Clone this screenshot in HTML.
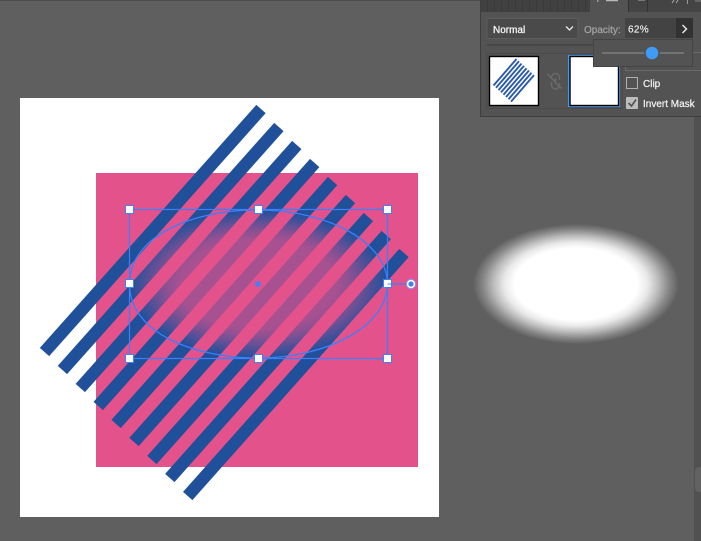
<!DOCTYPE html>
<html><head><meta charset="utf-8"><style>
html,body{margin:0;padding:0;width:701px;height:541px;overflow:hidden;background:#5f5f5f}
svg{position:absolute;left:0;top:0}
text{font-family:"Liberation Sans",sans-serif}
</style></head><body>
<svg width="701" height="541" viewBox="0 0 701 541" xmlns="http://www.w3.org/2000/svg">
<defs>
<radialGradient id="feather" cx="0.5" cy="0.5" r="0.5">
<stop offset="0" stop-color="#fff"/>
<stop offset="0.6" stop-color="#fff"/>
<stop offset="0.7" stop-color="#fff" stop-opacity=".86"/>
<stop offset="0.8" stop-color="#fff" stop-opacity=".58"/>
<stop offset="0.9" stop-color="#fff" stop-opacity=".26"/>
<stop offset="1" stop-color="#fff" stop-opacity="0"/>
</radialGradient>
<radialGradient id="maskg" cx="0.5" cy="0.5" r="0.5">
<stop offset="0" stop-color="#4f4f4f"/>
<stop offset="0.6" stop-color="#4f4f4f"/>
<stop offset="0.7" stop-color="#6e6e6e"/>
<stop offset="0.8" stop-color="#9c9c9c"/>
<stop offset="0.9" stop-color="#d0d0d0"/>
<stop offset="1" stop-color="#fff"/>
</radialGradient>
<mask id="m" maskUnits="userSpaceOnUse" x="0" y="0" width="701" height="541">
<rect width="701" height="541" fill="#fff"/>
<ellipse cx="258" cy="284" rx="129" ry="74" fill="url(#maskg)"/>
</mask>
</defs>

<rect x="0" y="0" width="701" height="1" fill="#4c4c4c"/>
<rect x="694" y="117" width="7" height="424" fill="#515151"/>
<rect x="695" y="467" width="8" height="25" rx="4" fill="#626262"/>

<!-- artboard -->
<rect x="20" y="98" width="419" height="419" fill="#fff"/>
<rect x="96" y="173" width="322" height="294" fill="#e4528c"/>

<g mask="url(#m)" stroke="#21509b" stroke-width="12.500" fill="none">
<path d="M261 109L44.500 352"/>
<path d="M278.900 127L62.400 370"/>
<path d="M296.800 145L80.300 388"/>
<path d="M314.700 163L98.200 406"/>
<path d="M332.600 181L116.100 424"/>
<path d="M350.500 199L134 442"/>
<path d="M368.400 217L151.900 460"/>
<path d="M386.200 235L169.800 478"/>
<path d="M404 253L187.700 496"/>
</g>

<!-- selection -->
<g fill="none" stroke="#3a80f8" stroke-width="1.200">
<rect x="129.500" y="209.500" width="258" height="149"/>
<path stroke-width="1.300" d="M129.500 284C129.500 238 188 210 258 210C329 210 387.500 243 387.500 284C387.500 325 329 358 258 358C196 358 129.500 334 129.500 284Z"/>
<path d="M387.500 284H407"/>
</g>
<circle cx="258" cy="284" r="3" fill="#4f7cf2"/>
<g fill="#fff" stroke="#3f82f5" stroke-width="1">
<rect x="125.500" y="205.500" width="8" height="8"/>
<rect x="254.500" y="205.500" width="8" height="8"/>
<rect x="383.500" y="205.500" width="8" height="8"/>
<rect x="125.500" y="279.500" width="8" height="8"/>
<rect x="383.500" y="279.500" width="8" height="8"/>
<rect x="125.500" y="354.500" width="8" height="8"/>
<rect x="254.500" y="354.500" width="8" height="8"/>
<rect x="383.500" y="354.500" width="8" height="8"/>
</g>
<path d="M387.500 284H392" stroke="#3f82f5" stroke-width="1"/>
<circle cx="411" cy="284" r="3.400" fill="#3f82f5" stroke="#fff" stroke-width="1.600"/>
<circle cx="411" cy="284" r="4.800" fill="none" stroke="#6f9ff8" stroke-width=".8"/>

<!-- mask preview -->
<ellipse cx="576" cy="284" rx="103" ry="60" fill="url(#feather)"/>

<!-- panel -->
<rect x="480" y="0" width="221" height="117" fill="#3e3e3e"/>
<rect x="481" y="12" width="220" height="104" fill="#535353"/>
<rect x="481" y="0" width="109" height="12" fill="#414141"/>
<g stroke="#3a3a3a" stroke-width="1">
<path d="M487.500 0V12M494.500 0V12M501.500 0V12M508.500 0V12M515.500 0V12M522.500 0V12M529.500 0V12M536.500 0V12M543.500 0V12M550.500 0V12M557.500 0V12M564.500 0V12M571.500 0V12M578.500 0V12M585.500 0V12"/>
</g>
<rect x="590" y="0" width="38" height="13" fill="#535353"/>
<rect x="628" y="0" width="73" height="12" fill="#444"/>
<path d="M628.500 0V12M647.500 0V12" stroke="#333" stroke-width="1"/>
<rect x="597" y="0" width="1.500" height="2" fill="#999"/>
<rect x="606" y="0" width="12" height="1.200" fill="#bbb"/>
<rect x="638" y="0" width="7" height="1" fill="#777"/>
<path d="M674 0L672 3M678 0L676 3" stroke="#aaa" stroke-width="1" fill="none"/>
<path d="M687.500 0V4" stroke="#999" stroke-width="1"/>
<path d="M695 1H701" stroke="#888" stroke-width="1"/>

<rect x="487" y="18.500" width="91" height="20" rx="1.500" fill="#4a4a4a" stroke="#5d5d5d" stroke-width="1"/>
<text x="493" y="33" font-size="10" fill="#f4f4f4" stroke="#f4f4f4" stroke-width=".3">Normal</text>
<path d="M566 26.500L569.500 30L573 26.500" fill="none" stroke="#ececec" stroke-width="1.300"/>
<text x="584" y="33" font-size="10" fill="#a2a2a2" stroke="#a2a2a2" stroke-width=".25">Opacity:</text>
<rect x="625" y="18" width="51" height="20" fill="#434343"/>
<text x="628" y="32.500" font-size="10" fill="#efefef" stroke="#efefef" stroke-width=".15" letter-spacing=".3">62%</text>
<rect x="676" y="18" width="17" height="20" fill="#323232"/>
<path d="M682.500 25L686.500 29L682.500 33" fill="none" stroke="#efefef" stroke-width="1.400"/>
<rect x="487" y="44" width="120" height="2" fill="#474747"/>
<rect x="625.500" y="52.500" width="76" height="18" fill="#535353" stroke="#6a6a6a" stroke-width="1"/>

<!-- thumbnails -->
<rect x="487" y="53.500" width="135" height="55" fill="none" stroke="#4a4a4a" stroke-width="1"/>
<rect x="489.500" y="56.500" width="49" height="49" fill="#fff" stroke="#000" stroke-width="1.400"/>
<g stroke="#2a5ba8" stroke-width="1.900" fill="none">
<path d="M516.500 59L493.500 85.500M519 61.300L496 87.800M521.500 63.600L498.500 90.100M524 65.900L501 92.400M526.500 68.200L503.500 94.700M529 70.500L506 97M531.500 72.800L508.500 99.300M534 75.100L511 101.600"/>
</g>
<g fill="none" stroke="#6a6a6a" stroke-width="1.500">
<path d="M551.500 79V77.500A4 4 0 0 1 559.500 77.500V80"/>
<path d="M551.500 82V85A4 4 0 0 0 559.500 85V83"/>
<path d="M555.500 78V84"/>
<path d="M547.500 74L561.500 88.500"/>
</g>
<rect x="568" y="55" width="52" height="52" fill="#3f9bf5"/>
<rect x="570" y="56.500" width="48.500" height="49" fill="#fff" stroke="#000" stroke-width="1.400"/>

<!-- checkboxes -->
<rect x="626.500" y="77.500" width="11" height="11" fill="none" stroke="#b0b0b0" stroke-width="1"/>
<text x="643" y="87" font-size="10" fill="#f0f0f0" stroke="#f0f0f0" stroke-width=".25">Clip</text>
<rect x="626" y="97" width="12" height="12" rx="1" fill="#bdbdbd"/>
<path d="M628.500 103L631.500 106L636 99.500" fill="none" stroke="#555" stroke-width="1.700"/>
<text x="643" y="107" font-size="10" fill="#f0f0f0" stroke="#f0f0f0" stroke-width=".25">Invert Mask</text>

<!-- opacity popup -->
<rect x="593.500" y="39.500" width="99" height="27" fill="#535353" stroke="#454545" stroke-width="1"/>
<rect x="602" y="52" width="82" height="2" fill="#737373"/>
<circle cx="652" cy="53" r="8" fill="#535353"/>
<circle cx="652" cy="53" r="6.300" fill="#3f9bf5"/>
</svg>
</body></html>
